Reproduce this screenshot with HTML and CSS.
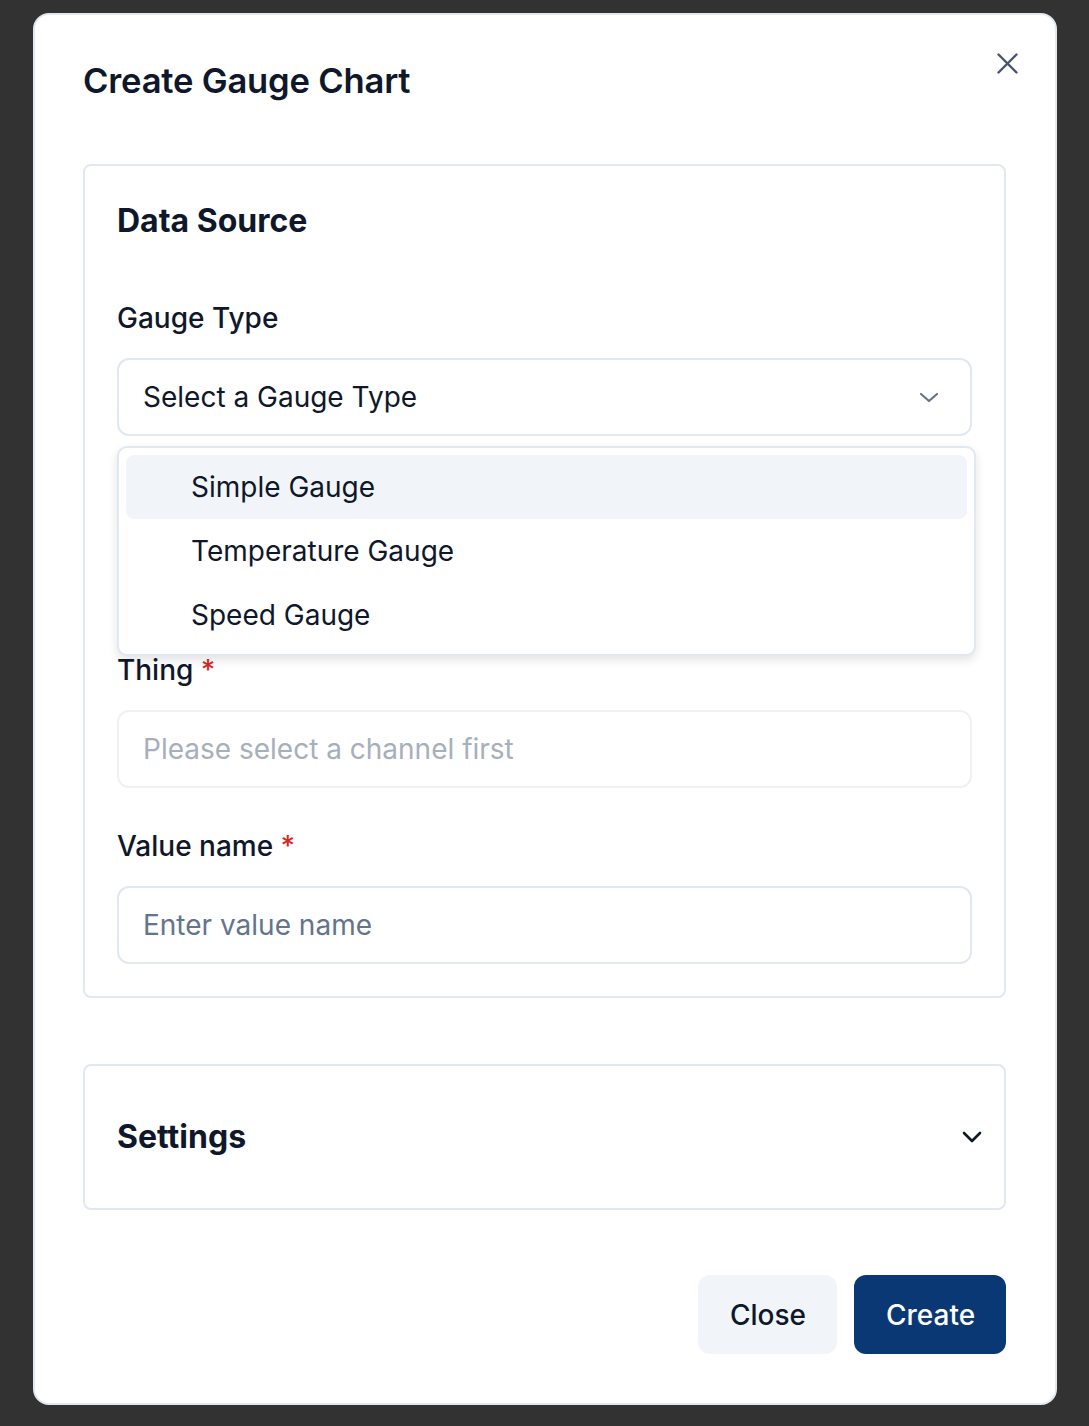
FILE: index.html
```html
<!DOCTYPE html>
<html lang="en">
<head>
<meta charset="utf-8">
<title>Create Gauge Chart</title>
<link rel="stylesheet" href="styles.css">
</head>
<body>
<div class="modal">
  <div class="modal-header">
    <h2 class="modal-title">Create Gauge Chart</h2>
    <button class="icon-btn close-x" aria-label="Close">
      <svg width="21" height="21" viewBox="0 0 21 21" fill="none" stroke="currentColor" stroke-width="2.4" stroke-linecap="round"><path d="M1.5 1.5L19.5 19.5M19.5 1.5L1.5 19.5"/></svg>
    </button>
  </div>

  <section class="card">
    <h3 class="card-title">Data Source</h3>
    <div class="fields">
      <div class="field">
        <label class="label">Gauge Type</label>
        <div class="select-wrap">
          <div class="control select">
            <span>Select a Gauge Type</span>
            <svg class="chev" width="22" height="14" viewBox="0 0 22 14" fill="none" stroke="currentColor" stroke-width="2.2" stroke-linecap="round" stroke-linejoin="round"><path d="M3 4L11 11L19 4"/></svg>
          </div>
          <div class="menu">
            <div class="menu-item active">Simple Gauge</div>
            <div class="menu-item">Temperature Gauge</div>
            <div class="menu-item">Speed Gauge</div>
          </div>
        </div>
      </div>
      <div class="field">
        <label class="label">Channel <span class="req">*</span></label>
        <div class="control"><span class="ph">Select a channel</span></div>
      </div>
      <div class="field">
        <label class="label">Thing <span class="req">*</span></label>
        <div class="control disabled"><span class="ph-light">Please select a channel first</span></div>
      </div>
      <div class="field">
        <label class="label">Value name <span class="req">*</span></label>
        <div class="control"><span class="ph">Enter value name</span></div>
      </div>
    </div>
  </section>

  <section class="card settings">
    <h3 class="card-title">Settings</h3>
    <svg class="chev-dark" width="24" height="16" viewBox="0 0 24 16" fill="none" stroke="currentColor" stroke-width="2.6" stroke-linecap="round" stroke-linejoin="round"><path d="M4 4L12 12L20 4"/></svg>
  </section>

  <div class="footer">
    <button class="btn btn-secondary">Close</button>
    <button class="btn btn-primary">Create</button>
  </div>
</div>
</body>
</html>
```

FILE: styles.css
```css
* { box-sizing: border-box; }
html, body { margin: 0; padding: 0; }
body {
  background: #323232;
  font-family: Inter, "Noto Sans", sans-serif;
  color: #0f172a;
  width: 1089px;
  height: 1426px;
  overflow: hidden;
}
.modal {
  margin: 13px 0 0 33px;
  width: 1024px;
  height: 1392px;
  background: #fff;
  border: 2px solid #e2e8f0;
  border-radius: 16px;
  padding: 0 49px 0 48px;
  display: flex;
  flex-direction: column;
}
.modal-header {
  position: relative;
  height: 149px;
  padding-top: 43px;
}
.modal-title {
  margin: 0;
  font-size: 34.6px;
  font-weight: 600;
  line-height: 44px;
  letter-spacing: -0.2px;
  color: #0f172a;
}
.icon-btn {
  background: none;
  border: 0;
  padding: 0;
  cursor: pointer;
}
.close-x {
  position: absolute;
  top: 38px;
  right: -12px;
  color: #475569;
  width: 21px;
  height: 21px;
}
.card {
  border: 2px solid #e2e8f0;
  border-radius: 8px;
  padding: 34px 32px 32px 32px;
}
.card-title {
  margin: 0;
  font-size: 32px;
  font-weight: 700;
  line-height: 42px;
  color: #0f172a;
}
.fields {
  margin-top: 56px;
  display: flex;
  flex-direction: column;
  gap: 38px;
}
.field {
  display: flex;
  flex-direction: column;
  gap: 20px;
}
.label {
  font-size: 28px;
  font-weight: 500;
  line-height: 40px;
  color: #0f172a;
}
.req { color: #dc2626; }
.select-wrap { position: relative; }
.control {
  height: 78px;
  border: 2px solid #e2e8f0;
  border-radius: 12px;
  padding: 0 24px;
  display: flex;
  align-items: center;
  font-size: 28px;
  color: #0f172a;
}
.select { justify-content: space-between; }
.chev { color: #64748b; margin-right: 6px; }
.control.disabled { border-color: #eef2f6; }
.ph { color: #64748b; }
.ph-light { color: #a6b0bd; }
.menu {
  position: absolute;
  top: calc(100% + 10px);
  left: 0;
  right: -4px;
  background: #fff;
  border: 2px solid #e2e8f0;
  border-radius: 10px;
  padding: 7px;
  box-shadow: 0 4px 10px rgba(15, 23, 42, 0.12);
  z-index: 5;
}
.menu-item {
  height: 64px;
  line-height: 64px;
  padding-left: 65px;
  font-size: 28px;
  border-radius: 8px;
  color: #0f172a;
}
.menu-item.active { background: #f1f5f9; }
.settings {
  margin-top: 66px;
  height: 146px;
  padding: 0 20px 0 32px;
  display: flex;
  align-items: center;
  justify-content: space-between;
}
.chev-dark { color: #0f172a; }
.footer {
  margin-top: 65px;
  display: flex;
  justify-content: flex-end;
  gap: 17px;
}
.btn {
  height: 79px;
  border: 0;
  border-radius: 12px;
  font-family: Inter, "Noto Sans", sans-serif;
  font-size: 28px;
  font-weight: 500;
  padding: 0 32px;
  cursor: pointer;
}
.btn-secondary { background: #f1f5f9; color: #0f172a; width: 139px; }
.btn-primary { background: #0a3875; color: #fff; width: 152px; }
```
